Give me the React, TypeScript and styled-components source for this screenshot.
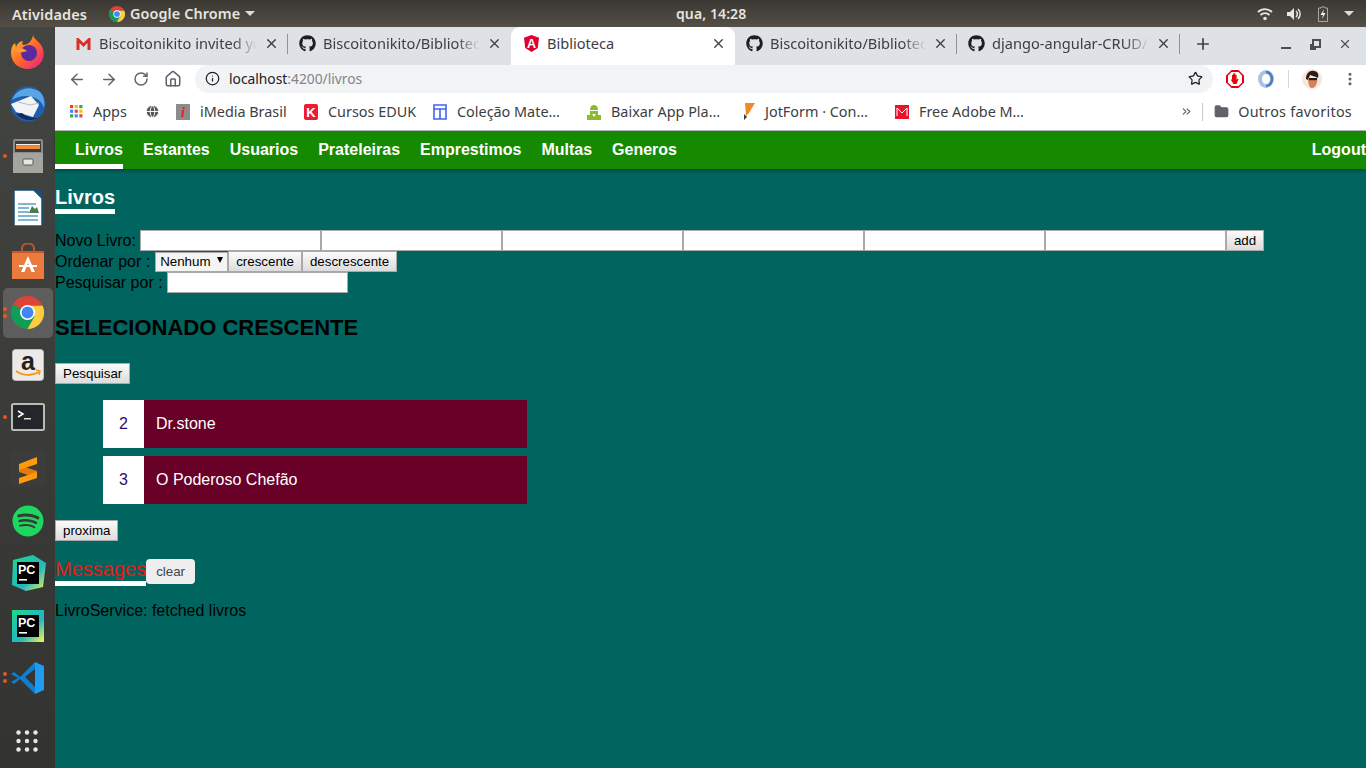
import React from "react";
import styled, { createGlobalStyle } from "styled-components";
import { ArrowLeft, ArrowRight, RotateCw, Home, Info, Star, MoreVertical, Plus, X, Folder, Globe, ChevronsRight } from "lucide-react";
import { FaGithub, FaSpotify } from "react-icons/fa";

const GlobalStyle = createGlobalStyle`
  html, body { margin: 0; padding: 0; height: 100%; overflow: hidden; }
  body { font-family: "Liberation Sans", Arial, sans-serif; }
  #root { height: 100%; }
`;

const Desktop = styled.div`
  width: 1366px;
  height: 768px;
  display: flex;
  flex-direction: column;
  overflow: hidden;
`;

const TopBar = styled.div`
  height: 27px;
  flex: none;
  display: flex;
  align-items: center;
  padding: 0 12px;
  background: linear-gradient(#3a3833, #544f47);
  color: #e6e4df;
  font: 600 14.5px "Noto Sans", sans-serif;
  letter-spacing: 0.1px;
`;

const TopLabel = styled.span`
  width: 97px;
`;

const AppMenu = styled.div`
  display: flex;
  align-items: center;
  gap: 5px;
  width: 567px;
  font-size: 14.4px;
`;

const Clock = styled.span`
  font-size: 14px;
`;

const Tray = styled.div`
  display: flex;
  align-items: center;
  gap: 13px;
  margin-left: auto;
`;

const Caret = styled.span`
  width: 0;
  height: 0;
  border-left: 5px solid transparent;
  border-right: 5px solid transparent;
  border-top: 5px solid #dedcd6;
`;

const Body = styled.div`
  flex: 1;
  display: flex;
  min-height: 0;
`;

const Dock = styled.div`
  width: 55px;
  flex: none;
  display: flex;
  flex-direction: column;
  align-items: center;
  gap: 2.15px;
  padding-bottom: 2px;
  box-sizing: border-box;
  background: linear-gradient(#434542, #333332);
`;

const DockSlot = styled.div<{ $active?: boolean }>`
  position: relative;
  width: 50px;
  height: 50px;
  flex: none;
  display: flex;
  align-items: center;
  justify-content: center;
  border-radius: 5px;
  background: ${(p) => (p.$active ? "rgba(255,255,255,0.17)" : "transparent")};
`;

const DockGrid = styled(DockSlot)`
  margin-top: auto;
  padding-right: 2px;
  box-sizing: border-box;
`;

const RunDots = styled.div`
  position: absolute;
  left: 0;
  top: 0;
  bottom: 0;
  display: flex;
  flex-direction: column;
  justify-content: center;
  gap: 3px;
`;

const RunDot = styled.span`
  width: 4px;
  height: 4px;
  border-radius: 50%;
  background: #e9541f;
`;

const Browser = styled.div`
  flex: 1;
  min-width: 0;
  display: flex;
  flex-direction: column;
`;

const TabStrip = styled.div`
  height: 38px;
  flex: none;
  display: flex;
  padding-left: 11px;
  background: #dee1e6;
  box-sizing: border-box;
`;

const Tab = styled.div<{ $active?: boolean; $w: number; $sep?: boolean }>`
  position: relative;
  width: ${(p) => p.$w}px;
  height: 38px;
  flex: none;
  box-sizing: border-box;
  display: flex;
  align-items: center;
  padding: 0 9px 6px 11px;
  gap: 7px;
  border-radius: 9px 9px 0 0;
  background: ${(p) => (p.$active ? "#fff" : "transparent")};
  color: #3c4043;
  font: 14.6px "Noto Sans", sans-serif;
  &::after {
    content: "";
    display: ${(p) => (p.$sep ? "block" : "none")};
    position: absolute;
    right: 0;
    top: 7px;
    width: 1px;
    height: 20px;
    background: #8f9296;
  }
`;

const TabTitle = styled.span<{ $fade?: boolean }>`
  flex: 1;
  min-width: 0;
  overflow: hidden;
  white-space: nowrap;
  ${(p) =>
    p.$fade
      ? "mask-image: linear-gradient(90deg, #000 85%, transparent 100%);"
      : ""}
`;

const NewTab = styled.div`
  width: 46px;
  padding-bottom: 5px;
  box-sizing: border-box;
  display: flex;
  align-items: center;
  justify-content: center;
  color: #3c4043;
`;

const WindowButtons = styled.div`
  display: flex;
  align-items: center;
  gap: 17px;
  margin-left: auto;
  margin-right: 14px;
  padding-bottom: 5px;
  color: #4a4d51;
`;

const MinimizeMark = styled.span`
  width: 10px;
  height: 2px;
  margin-top: 9px;
  background: #4a4d51;
`;

const RestoreIcon = styled.span`
  position: relative;
  width: 9px;
  height: 9px;
  margin-left: 4px;
  border: 2px solid #4a4d51;
  box-sizing: border-box;
  &::after {
    content: "";
    position: absolute;
    left: -4px;
    bottom: -4px;
    width: 4px;
    height: 4px;
    border-left: 2px solid #4a4d51;
    border-bottom: 2px solid #4a4d51;
  }
`;

const Toolbar = styled.div`
  height: 32px;
  flex: none;
  display: flex;
  align-items: flex-start;
  background: #fff;
  padding-left: 13px;
  box-sizing: border-box;
  color: #5f6368;
`;

const ToolButtons = styled.div`
  display: flex;
  align-items: center;
  gap: 14px;
  height: 28px;
  width: 127px;
`;

const ToolIcon = styled.span`
  width: 18px;
  display: flex;
  justify-content: center;
`;

const Omnibox = styled.div`
  width: 1018px;
  height: 28px;
  flex: none;
  display: flex;
  align-items: center;
  box-sizing: border-box;
  padding: 0 10px 1px 10px;
  gap: 9px;
  background: #f1f3f4;
  border-radius: 14px;
  font: 13.8px "Noto Sans", sans-serif;
  color: #202124;
`;

const UrlRest = styled.span`
  color: #80868b;
`;

const Url = styled.span`
  flex: 1;
`;

const Extensions = styled.div`
  display: flex;
  align-items: center;
  gap: 13px;
  height: 28px;
  margin-left: 13px;
`;

const ToolDivider = styled.span`
  width: 1px;
  height: 18px;
  background: #d5d7da;
`;

const MenuDots = styled.span`
  display: flex;
  margin-left: 7px;
`;

const Bookmarks = styled.div`
  height: 34px;
  flex: none;
  display: flex;
  align-items: center;
  box-sizing: border-box;
  padding: 0 0 4px 15px;
  background: #fff;
  border-bottom: 1px solid #b5b7b9;
  color: #3c4043;
  font: 14.4px "Noto Sans", sans-serif;
`;

const Bookmark = styled.div<{ $w: number }>`
  width: ${(p) => p.$w}px;
  flex: none;
  display: flex;
  align-items: center;
  gap: 10px;
  white-space: nowrap;
`;

const BookmarkEnd = styled.div`
  margin-left: auto;
  margin-right: 14px;
  display: flex;
  align-items: center;
  gap: 9px;
  color: #5f6368;
`;

const BookmarkDivider = styled.span`
  width: 1px;
  height: 18px;
  background: #c9cbce;
  margin-right: 2px;
`;

const OtherLabel = styled.span`
  color: #3c4043;
  letter-spacing: 0.25px;
`;

const Page = styled.div`
  flex: 1;
  min-height: 0;
  background: #00655f;
  font-size: 16px;
  line-height: 18px;
  color: #000;
`;

const Nav = styled.nav`
  height: 38px;
  display: flex;
  background: #158a00;
  box-shadow: 0 2px 3px rgba(0, 0, 0, 0.3);
`;

const NavLink = styled.a<{ $active?: boolean; $right?: boolean }>`
  display: block;
  height: 38px;
  box-sizing: border-box;
  padding: 10px 0 0 20px;
  color: #fff;
  font-weight: 700;
  font-size: 16px;
  line-height: 18px;
  margin-left: ${(p) => (p.$right ? "auto" : "0")};
  border-bottom: ${(p) => (p.$active ? "5px solid #fff" : "0")};
`;

const Content = styled.div`
  padding-top: 17px;
`;

const TitleWrap = styled.div`
  display: flex;
`;

const PageTitle = styled.h2`
  margin: 0;
  font-size: 20px;
  line-height: 23px;
  font-weight: 700;
  color: #fff;
  border-bottom: 5px solid #fff;
`;

const FormRows = styled.div`
  margin-top: 16px;
`;

const FormRow = styled.div`
  display: flex;
  align-items: center;
  height: 21px;
`;

const Label = styled.span`
  margin-right: 4px;
`;

const TextInput = styled.input`
  width: 181px;
  height: 21px;
  box-sizing: border-box;
  padding: 0;
  border: 1px solid #a9a9a9;
  background: #fff;
  border-radius: 0;
  outline: none;
`;

const PlainButton = styled.button`
  height: 21px;
  box-sizing: border-box;
  padding: 0 7px;
  border: 1px solid #a9a9a9;
  border-radius: 0;
  background: linear-gradient(#fbfbfb, #dcdcdc);
  color: #000;
  font: 13.33px "Liberation Sans", Arial, sans-serif;
`;

const OrderSelect = styled.div`
  width: 73px;
  height: 20px;
  margin-left: 1px;
  box-sizing: border-box;
  display: flex;
  align-items: center;
  justify-content: space-between;
  padding: 0 4px;
  border: 1px solid #a9a9a9;
  background: #f4f4f4;
  font-size: 13.33px;
`;

const SelectArrow = styled.span`
  width: 0;
  height: 0;
  border-left: 3.5px solid transparent;
  border-right: 3.5px solid transparent;
  border-top: 6px solid #000;
  margin-bottom: 3px;
`;

const Selected = styled.h2`
  margin: 23px 0 23px;
  font-size: 22px;
  line-height: 24px;
  font-weight: 700;
  color: #000;
`;

const BookList = styled.ul`
  list-style: none;
  margin: 16px 0 16px 48px;
  padding: 0;
  width: 424px;
  display: flex;
  flex-direction: column;
  gap: 8px;
`;

const BookItem = styled.li`
  height: 48px;
  display: flex;
  background: #680028;
  color: #fff;
`;

const BookId = styled.span`
  width: 41px;
  flex: none;
  display: flex;
  align-items: center;
  justify-content: center;
  background: #fff;
  color: #2f0a6e;
`;

const BookName = styled.span`
  display: flex;
  align-items: center;
  padding-left: 12px;
`;

const MessagesHeader = styled.div`
  display: flex;
  margin-top: 17px;
`;

const MessagesTitle = styled.h2`
  margin: 0;
  height: 23px;
  font-size: 20px;
  line-height: 22px;
  font-weight: 400;
  color: #f01414;
  border-bottom: 5px solid #fff;
`;

const ClearButton = styled.button`
  height: 25px;
  margin-top: 1px;
  padding: 0 10px;
  border: 0;
  border-radius: 4px;
  background: #eee;
  color: #444;
  font: 13.33px "Liberation Sans", Arial, sans-serif;
`;

const MessageLine = styled.p`
  margin: 16px 0 0;
`;

function Firefox() {
  return (
    <svg width="36" height="36" viewBox="0 0 36 36">
      <defs>
        <linearGradient id="ffa" x1="0" y1="0" x2="1" y2="1">
          <stop offset="0" stopColor="#ffc52e" />
          <stop offset="0.5" stopColor="#ff6a2b" />
          <stop offset="1" stopColor="#e5188b" />
        </linearGradient>
      </defs>
      <path d="M23 1c1 5 8 7 10 14 3 11-5 20-15 20C8 35 1 28 1 19c0-4 1-8 4-10l1 4c1-3 4-6 7-6-1 2-1 3 0 4 4 0 9-3 10-10z" fill="url(#ffa)" />
      <circle cx="19" cy="19" r="8" fill="#5b2a9e" />
      <path d="M5 16c4-3 9-2 12 1-2 1-7 2-9 1z" fill="#ff9a2b" />
    </svg>
  );
}

function Thunderbird() {
  return (
    <svg width="36" height="36" viewBox="0 0 36 36">
      <circle cx="18" cy="18" r="17.5" fill="#1f5fb0" />
      <path d="M2 14C6 4 18-2 30 6c4 4 5 10 4 16-2-8-10-12-18-12C10 10 5 12 2 14z" fill="#5aa5e6" />
      <path d="M1 18l20-8 8 9-6 12L6 26z" fill="#f2f3f6" />
      <path d="M8 16l12 3 9-2" stroke="#b8bcc6" strokeWidth="1" fill="none" />
      <path d="M6 28c6 6 14 8 22 4-6 0-12-1-16-5z" fill="#182a5c" />
    </svg>
  );
}

function FileCabinet() {
  return (
    <svg width="32" height="34" viewBox="0 0 32 34">
      <rect x="1" y="0" width="30" height="34" rx="2" fill="#8d8d87" />
      <rect x="3" y="2" width="26" height="11" fill="#3f3b36" />
      <rect x="4" y="7" width="24" height="3" fill="#ef8a3a" />
      <rect x="4" y="5" width="24" height="1.5" fill="#f4efe2" />
      <rect x="1" y="14" width="30" height="20" fill="#a5a5a0" />
      <rect x="11" y="20" width="10" height="6" rx="1" fill="#e6e6e2" stroke="#5b5b57" />
    </svg>
  );
}

function Writer() {
  return (
    <svg width="30" height="36" viewBox="0 0 30 36">
      <path d="M1 0h20l8 8v28H1z" fill="#fff" stroke="#17507a" strokeWidth="1.5" />
      <path d="M20 0h9v9z" fill="#17507a" />
      <rect x="5" y="13" width="18" height="2" fill="#7fb6d6" />
      <rect x="5" y="17" width="11" height="2" fill="#7fb6d6" />
      <rect x="5" y="21" width="11" height="2" fill="#7fb6d6" />
      <rect x="5" y="25" width="20" height="2" fill="#7fb6d6" />
      <rect x="5" y="29" width="20" height="2" fill="#7fb6d6" />
      <path d="M16 23l3-7 3 3 2-2 2 6z" fill="#4b7b4f" />
    </svg>
  );
}

function Store() {
  return (
    <svg width="34" height="36" viewBox="0 0 34 36">
      <path d="M11 9V5c0-6 12-6 12 0v4" stroke="#b8532a" strokeWidth="2" fill="none" />
      <path d="M1 8h32v28H1z" fill="#e97b3f" />
      <path d="M1 8h32v2H1z" fill="#c9592b" />
      <path d="M17 13l7 16h-3.5l-3.5-9-3.5 9H10z" fill="#fff" />
      <rect x="8" y="22" width="18" height="2" fill="#fff" />
    </svg>
  );
}

function ChromeLogo({ size }: { size: number }) {
  return (
    <svg width={size} height={size} viewBox="0 0 48 48">
      <circle cx="24" cy="24" r="24" fill="#db4437" />
      <path d="M24 24L3.2 12A24 24 0 0 0 12 44.8L24 48z" fill="#0f9d58" />
      <path d="M24 24L12 44.8A24 24 0 0 0 46 14.5L24 14z" fill="#0f9d58" />
      <path d="M24 14h22A24 24 0 0 1 24 48L34 30z" fill="#ffcd40" />
      <circle cx="24" cy="24" r="11" fill="#fff" />
      <circle cx="24" cy="24" r="8.6" fill="#4285f4" />
    </svg>
  );
}

function Amazon() {
  return (
    <svg width="32" height="32" viewBox="0 0 32 32">
      <rect x="0.5" y="0.5" width="31" height="31" rx="3" fill="#eceae6" stroke="#bbb" />
      <text x="16" y="21" textAnchor="middle" fontFamily="Liberation Sans, sans-serif" fontSize="25" fontWeight="700" fill="#222">a</text>
      <path d="M4 22c7 5 16 5 23 1" stroke="#f39a1d" strokeWidth="2" fill="none" />
      <path d="M24 21l4 1-1 4" stroke="#f39a1d" strokeWidth="1.5" fill="none" />
    </svg>
  );
}

function Terminal() {
  return (
    <svg width="34" height="28" viewBox="0 0 34 28">
      <rect x="1" y="1" width="32" height="26" rx="1.5" fill="#23272b" stroke="#b9b9b6" strokeWidth="2" />
      <path d="M7 8l5 3-5 3" stroke="#fff" strokeWidth="1.5" fill="none" />
      <rect x="13" y="15" width="7" height="1.5" fill="#ddd" />
    </svg>
  );
}

function Sublime() {
  return (
    <svg width="36" height="36" viewBox="0 0 36 36">
      <rect width="36" height="36" rx="5" fill="#3c3c3b" />
      <path d="M9 14l18 6v7L9 21z" fill="#e57a0a" />
      <path d="M27 6v7L9 19v-6z" fill="#ff9a0b" />
      <path d="M27 21v6L9 33v-6z" fill="#ff9a0b" />
    </svg>
  );
}

function PyCharm({ tilted }: { tilted?: boolean }) {
  return (
    <svg width="36" height="36" viewBox="0 0 36 36">
      <defs>
        <linearGradient id="pcg" x1="0" y1="0" x2="1" y2="1">
          <stop offset="0" stopColor="#21d789" />
          <stop offset="0.6" stopColor="#21b6c4" />
          <stop offset="1" stopColor="#fcf84a" />
        </linearGradient>
      </defs>
      {tilted ? (
        <path d="M3 5l20-5 13 8-3 24-17 4L2 30z" fill="url(#pcg)" />
      ) : (
        <rect x="2" y="2" width="32" height="32" fill="url(#pcg)" />
      )}
      <rect x="7" y="7" width="22" height="22" fill="#000" />
      <text x="8" y="18.5" fontFamily="Liberation Sans, sans-serif" fontSize="12.5" fontWeight="700" fill="#fff">PC</text>
      <rect x="9" y="24" width="8" height="1.6" fill="#fff" />
    </svg>
  );
}

function VsCode() {
  return (
    <svg width="34" height="34" viewBox="0 0 34 34">
      <path d="M24 1l9 4v24l-9 4z" fill="#1f9cf0" />
      <path d="M24 1L9 16 3 11 0 13l7 4-7 4 3 2 6-5 15 15 0-7-10-10L24 8z" fill="#0c7fd0" />
    </svg>
  );
}

function AppGrid() {
  const dots = Array.from({ length: 9 });
  return (
    <svg width="22" height="22" viewBox="0 0 22 22">
      {dots.map((_, i) => (
        <circle key={i} cx={2.5 + (i % 3) * 8.5} cy={2.5 + Math.floor(i / 3) * 8.5} r="2.2" fill="#e8e8e8" />
      ))}
    </svg>
  );
}

const GmailSvg = styled.svg`
  margin-left: -2px;
`;

function GmailMark() {
  return (
    <GmailSvg width="17" height="13" viewBox="0 0 16 13">
      <path d="M1 13V1h2l5 5 5-5h2v12h-3V6L8 10 4 6v7z" fill="#d93025" />
    </GmailSvg>
  );
}

const AngularSvg = styled.svg`
  margin-left: 1px;
`;

function AngularMark() {
  return (
    <AngularSvg width="17" height="17" viewBox="0 0 17 17">
      <path d="M8.5 0L16 2.7 14.8 13 8.5 17 2.200 13 1 2.7z" fill="#dd0031" />
      <text x="8.5" y="13" textAnchor="middle" fontFamily="Liberation Sans, sans-serif" fontWeight="700" fontSize="12.5" fill="#fff">A</text>
    </AngularSvg>
  );
}

function AppsMark() {
  const colors = ["#ea4335", "#fbbc05", "#34a853", "#4285f4", "#ea4335", "#fbbc05", "#34a853", "#4285f4", "#ea4335"];
  return (
    <svg width="13" height="13" viewBox="0 0 14 14">
      {colors.map((c, i) => (
        <rect key={i} x={(i % 3) * 5} y={Math.floor(i / 3) * 5} width="3.4" height="3.4" fill={c} />
      ))}
    </svg>
  );
}

function IMediaMark() {
  return (
    <svg width="14" height="16" viewBox="0 0 14 16">
      <rect width="14" height="16" fill="#8c8c8c" />
      <text x="7" y="13" textAnchor="middle" fontFamily="Liberation Serif, serif" fontStyle="italic" fontWeight="700" fontSize="14" fill="#d9232e">i</text>
    </svg>
  );
}

function EdukMark() {
  return (
    <svg width="14" height="16" viewBox="0 0 14 16">
      <rect width="14" height="16" rx="2" fill="#ee1c2e" />
      <text x="7" y="13" textAnchor="middle" fontFamily="Liberation Sans, sans-serif" fontWeight="700" fontSize="13" fill="#fff">K</text>
    </svg>
  );
}

function FormsMark() {
  return (
    <svg width="14" height="16" viewBox="0 0 14 16">
      <path d="M1 1h12v14H1zM1 5h12M7 5v10" fill="none" stroke="#3f62f0" strokeWidth="1.6" />
    </svg>
  );
}

function AndroidMark() {
  return (
    <svg width="14" height="16" viewBox="0 0 14 16">
      <rect y="11" width="14" height="5" fill="#8dbb2a" />
      <path d="M7 1c-3 0-4 3-4 5h8c0-2-1-5-4-5z" fill="#8dbb2a" />
      <rect x="3" y="7" width="8" height="5" fill="#8dbb2a" />
      <path d="M5 10l2 3 2-3z" fill="#fff" />
    </svg>
  );
}

function JotformMark() {
  return (
    <svg width="12" height="17" viewBox="0 0 12 17">
      <path d="M2 0h10L6 10 3 13z" fill="#f08a24" />
      <path d="M1 11l3 3-3 3z" fill="#2c3e50" />
    </svg>
  );
}

function AdobeMark() {
  return (
    <svg width="14" height="14" viewBox="0 0 14 14">
      <rect width="14" height="14" fill="#e8132b" />
      <path d="M2 11V3l5 5 5-5v8" fill="none" stroke="#fff" strokeWidth="1" />
    </svg>
  );
}

function StopSign() {
  return (
    <svg width="18" height="18" viewBox="0 0 18 18">
      <path d="M5.5 0h7L18 5.5v7L12.5 18h-7L0 12.5v-7z" fill="#e8000b" />
      <path d="M5.5 2h7L16 5.5v7L12.5 16h-7L2 12.5v-7z" fill="#fff" />
      <path d="M6 9V5h1v3-4.500h1.200V8 3.500h1.200V8 5h1.200v5l1-1.500 1 .5L10.500 14H7.500L5 10z" fill="#e8000b" />
    </svg>
  );
}

function RingExt() {
  return (
    <svg width="18" height="18" viewBox="0 0 18 18">
      <ellipse cx="9" cy="9" rx="6" ry="7" fill="none" stroke="#a9c4e2" strokeWidth="4" />
      <path d="M9 2a6 7 0 0 1 0 14" fill="none" stroke="#4d7fb8" strokeWidth="2.5" />
    </svg>
  );
}

function Avatar() {
  return (
    <svg width="20" height="20" viewBox="0 0 20 20">
      <circle cx="10" cy="10" r="10" fill="#f4e7dc" />
      <path d="M4 10c0-6 4-9 8-8 4 0 5 4 4 7l-2-1-6-2-2 5z" fill="#2c1c14" />
      <path d="M6 9l9 0c1 5-2 10-5 10S6 14 6 9z" fill="#d9805a" />
      <rect x="7" y="9" width="8" height="2.2" fill="#1d1d1d" />
    </svg>
  );
}

function WifiGlyph() {
  return (
    <svg width="16" height="14" viewBox="0 0 16 14">
      <path d="M1 5a10 10 0 0 1 14 0M3.5 8a6.5 6.5 0 0 1 9 0" fill="none" stroke="#e8e6e1" strokeWidth="1.8" />
      <circle cx="8" cy="11.5" r="1.8" fill="#e8e6e1" />
    </svg>
  );
}

function SoundGlyph() {
  return (
    <svg width="16" height="14" viewBox="0 0 16 14">
      <path d="M1 5h3l4-4v12l-4-4H1z" fill="#e8e6e1" />
      <path d="M10 4a4 4 0 0 1 0 6M12 2a7 7 0 0 1 0 10" fill="none" stroke="#e8e6e1" strokeWidth="1.5" />
    </svg>
  );
}

const BatterySvg = styled.svg`
  margin: 0 3px;
`;

function BatteryGlyph() {
  return (
    <BatterySvg width="10" height="16" viewBox="0 0 10 16">
      <path d="M3 1h4v1h2.5v13.5H.5V2H3z" fill="none" stroke="#a9a79f" />
      <path d="M6 3L2.5 9H5l-1 4 3.5-6H5z" fill="#f2f0eb" />
    </BatterySvg>
  );
}

const dockApps: { key: string; icon: React.ReactNode; dots?: number; active?: boolean }[] = [
  { key: "firefox", icon: <Firefox /> },
  { key: "thunderbird", icon: <Thunderbird /> },
  { key: "files", icon: <FileCabinet />, dots: 1 },
  { key: "writer", icon: <Writer /> },
  { key: "store", icon: <Store /> },
  { key: "chrome", icon: <ChromeLogo size={33} />, dots: 2, active: true },
  { key: "amazon", icon: <Amazon /> },
  { key: "terminal", icon: <Terminal />, dots: 1 },
  { key: "sublime", icon: <Sublime /> },
  { key: "spotify", icon: <FaSpotify size={32} color="#1ed760" /> },
  { key: "pycharm1", icon: <PyCharm tilted /> },
  { key: "pycharm2", icon: <PyCharm /> },
  { key: "vscode", icon: <VsCode />, dots: 2 },
];

const navItems = ["Livros", "Estantes", "Usuarios", "Prateleiras", "Emprestimos", "Multas", "Generos"];

const bookmarks: { label: string; icon: React.ReactNode; width: number }[] = [
  { label: "Apps", icon: <AppsMark />, width: 75 },
  { label: "", icon: <Globe size={15} color="#fff" fill="#555" strokeWidth={1.5} />, width: 31 },
  { label: "iMedia Brasil", icon: <IMediaMark />, width: 128 },
  { label: "Cursos EDUK", icon: <EdukMark />, width: 129 },
  { label: "Coleção Mate…", icon: <FormsMark />, width: 154 },
  { label: "Baixar App Pla…", icon: <AndroidMark />, width: 156 },
  { label: "JotForm · Con…", icon: <JotformMark />, width: 152 },
  { label: "Free Adobe M…", icon: <AdobeMark />, width: 140 },
];

export default function App() {
  return (
    <Desktop>
      <GlobalStyle />
      <TopBar>
        <TopLabel>Atividades</TopLabel>
        <AppMenu>
          <ChromeLogo size={16} />
          Google Chrome
          <Caret />
        </AppMenu>
        <Clock>qua, 14:28</Clock>
        <Tray>
          <WifiGlyph />
          <SoundGlyph />
          <BatteryGlyph />
          <Caret />
        </Tray>
      </TopBar>
      <Body>
        <Dock>
          {dockApps.map((app) => (
            <DockSlot key={app.key} $active={app.active}>
              {app.icon}
              {app.dots ? (
                <RunDots>
                  {Array.from({ length: app.dots }).map((_, i) => (
                    <RunDot key={i} />
                  ))}
                </RunDots>
              ) : null}
            </DockSlot>
          ))}
          <DockGrid>
            <AppGrid />
          </DockGrid>
        </Dock>
        <Browser>
          <TabStrip>
            <Tab $w={222} $sep>
              <GmailMark />
              <TabTitle $fade>Biscoitonikito invited you to</TabTitle>
              <X size={15} strokeWidth={2.2} />
            </Tab>
            <Tab $w={223}>
              <FaGithub size={17} color="#1b1f23" />
              <TabTitle $fade>Biscoitonikito/Biblioteca</TabTitle>
              <X size={15} strokeWidth={2.2} />
            </Tab>
            <Tab $w={224} $active>
              <AngularMark />
              <TabTitle>Biblioteca</TabTitle>
              <X size={15} strokeWidth={2.2} />
            </Tab>
            <Tab $w={222} $sep>
              <FaGithub size={17} color="#1b1f23" />
              <TabTitle $fade>Biscoitonikito/Biblioteca</TabTitle>
              <X size={15} strokeWidth={2.2} />
            </Tab>
            <Tab $w={223} $sep>
              <FaGithub size={17} color="#1b1f23" />
              <TabTitle $fade>django-angular-CRUD/pulls</TabTitle>
              <X size={15} strokeWidth={2.2} />
            </Tab>
            <NewTab>
              <Plus size={18} strokeWidth={2.2} />
            </NewTab>
            <WindowButtons>
              <MinimizeMark />
              <RestoreIcon />
              <X size={14} strokeWidth={2} />
            </WindowButtons>
          </TabStrip>
          <Toolbar>
            <ToolButtons>
              <ToolIcon><ArrowLeft size={19} /></ToolIcon>
              <ToolIcon><ArrowRight size={19} /></ToolIcon>
              <ToolIcon><RotateCw size={16} strokeWidth={2.2} /></ToolIcon>
              <ToolIcon><Home size={18} /></ToolIcon>
            </ToolButtons>
            <Omnibox>
              <Info size={15} />
              <Url>
                localhost<UrlRest>:4200/livros</UrlRest>
              </Url>
              <Star size={15} />
            </Omnibox>
            <Extensions>
              <StopSign />
              <RingExt />
              <ToolDivider />
              <Avatar />
              <MenuDots><MoreVertical size={16} strokeWidth={2.6} /></MenuDots>
            </Extensions>
          </Toolbar>
          <Bookmarks>
            {bookmarks.map((b) => (
              <Bookmark key={b.label + b.width} $w={b.width}>
                {b.icon}
                {b.label}
              </Bookmark>
            ))}
            <BookmarkEnd>
              <ChevronsRight size={13} />
              <BookmarkDivider />
              <Folder size={15} fill="#5f6368" />
              <OtherLabel>Outros favoritos</OtherLabel>
            </BookmarkEnd>
          </Bookmarks>
          <Page>
            <Nav>
              {navItems.map((item, i) => (
                <NavLink key={item} $active={i === 0}>
                  {item}
                </NavLink>
              ))}
              <NavLink $right>Logout</NavLink>
            </Nav>
            <Content>
              <TitleWrap>
                <PageTitle>Livros</PageTitle>
              </TitleWrap>
              <FormRows>
                <FormRow>
                  <Label>Novo Livro:</Label>
                  <TextInput />
                  <TextInput />
                  <TextInput />
                  <TextInput />
                  <TextInput />
                  <TextInput />
                  <PlainButton>add</PlainButton>
                </FormRow>
                <FormRow>
                  <Label>Ordenar por :</Label>
                  <OrderSelect>
                    Nenhum
                    <SelectArrow />
                  </OrderSelect>
                  <PlainButton>crescente</PlainButton>
                  <PlainButton>descrescente</PlainButton>
                </FormRow>
                <FormRow>
                  <Label>Pesquisar por :</Label>
                  <TextInput />
                </FormRow>
              </FormRows>
              <Selected>SELECIONADO CRESCENTE</Selected>
              <PlainButton>Pesquisar</PlainButton>
              <BookList>
                <BookItem>
                  <BookId>2</BookId>
                  <BookName>Dr.stone</BookName>
                </BookItem>
                <BookItem>
                  <BookId>3</BookId>
                  <BookName>O Poderoso Chefão</BookName>
                </BookItem>
              </BookList>
              <PlainButton>proxima</PlainButton>
              <MessagesHeader>
                <MessagesTitle>Messages</MessagesTitle>
                <ClearButton>clear</ClearButton>
              </MessagesHeader>
              <MessageLine>LivroService: fetched livros</MessageLine>
            </Content>
          </Page>
        </Browser>
      </Body>
    </Desktop>
  );
}
